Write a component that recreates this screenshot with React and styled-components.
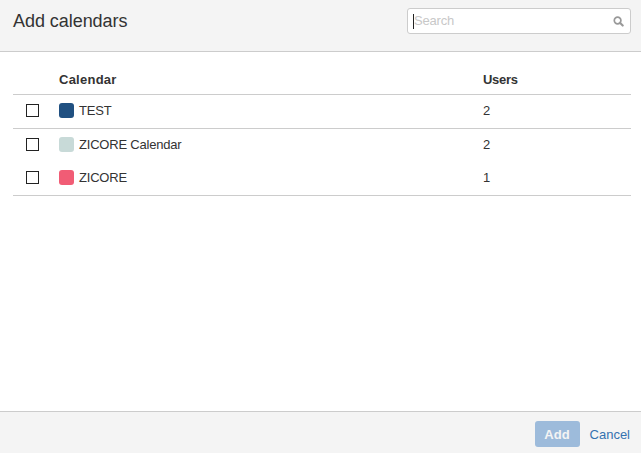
import React from "react";
import styled, { createGlobalStyle } from "styled-components";

const GlobalStyle = createGlobalStyle`
  * { box-sizing: border-box; }
  body {
    margin: 0;
    background: #fff;
    color: #333;
    font: 13px/20px Arial, "Liberation Sans", sans-serif;
  }
`;

const Dialog = styled.div`
  display: flex;
  flex-direction: column;
  width: 641px;
  height: 453px;
  background: #fff;
  overflow: hidden;
`;

const Header = styled.header`
  display: flex;
  justify-content: space-between;
  align-items: flex-start;
  height: 52px;
  padding: 8px 10px 0 13px;
  background: #f4f4f4;
  border-bottom: 1px solid #ccc;
`;

const Title = styled.h1`
  margin: 0;
  padding-top: 1px;
  font-size: 18px;
  line-height: 24px;
  font-weight: 400;
  letter-spacing: -0.05px;
`;

const SearchField = styled.div`
  display: flex;
  align-items: center;
  width: 224px;
  height: 26px;
  padding: 0 6px 0 5px;
  border: 1px solid #ccc;
  border-radius: 3px;
  background: #fff;
`;

const Caret = styled.span`
  width: 1px;
  height: 15px;
  background: #222;
`;

const Placeholder = styled.span`
  flex: 1;
  color: #c8c8c8;
  letter-spacing: -0.2px;
`;

const SearchIcon = styled.svg`
  width: 11px;
  height: 11px;
`;

const Content = styled.main`
  flex: 1;
  padding: 12px 10px 0 13px;
`;

const Row = styled.div`
  display: grid;
  grid-template-columns: 46px 424px 1fr;
  align-items: center;
  height: ${(p) => p.$height}px;
  padding-bottom: ${(p) => (p.$head ? 0 : 2)}px;
  padding-top: ${(p) => (p.$head ? 2 : 0)}px;
  border-bottom: ${(p) => (p.$line ? "1px solid #ccc" : "none")};
`;

const HeadCell = styled.span`
  font-weight: 700;
  letter-spacing: ${(p) => p.$spacing}px;
`;

const Checkbox = styled.span`
  width: 13px;
  height: 13px;
  margin-left: 13px;
  border: 1px solid #222;
  background: #fff;
`;

const Calendar = styled.span`
  display: flex;
  align-items: center;
  gap: 5px;
  letter-spacing: ${(p) => p.$spacing}px;
`;

const Swatch = styled.span`
  width: 15px;
  height: 15px;
  border-radius: 3px;
  background: ${(p) => p.$color};
`;

const Footer = styled.footer`
  display: flex;
  justify-content: flex-end;
  align-items: flex-start;
  gap: 10px;
  height: 42px;
  padding: 9px 11px 0 0;
  background: #f4f4f4;
  border-top: 1px solid #ccc;
`;

const AddButton = styled.button`
  width: 45px;
  height: 26px;
  padding: 0;
  border: 0;
  border-radius: 3px;
  background: #9dbbdb;
  color: #f4f4f4;
  font: 700 13px/28px Arial, "Liberation Sans", sans-serif;
  letter-spacing: 0.1px;
`;

const CancelLink = styled.a`
  color: #3572b0;
  line-height: 28px;
`;

const calendars = [
  { name: "TEST", color: "#205081", users: 2, height: 34, line: true },
  { name: "ZICORE Calendar", color: "#c8dad8", users: 2, height: 33, line: false },
  { name: "ZICORE", color: "#f15c75", users: 1, height: 34, line: true },
];

export default function App() {
  return (
    <>
      <GlobalStyle />
      <Dialog>
        <Header>
          <Title>Add calendars</Title>
          <SearchField>
            <Caret />
            <Placeholder>Search</Placeholder>
            <SearchIcon viewBox="0 0 11 11" fill="none" stroke="#999">
              <circle cx="4.6" cy="4.5" r="3.3" strokeWidth="1.7" />
              <path d="M7.2 7.1 9.7 9.6" strokeWidth="2.1" strokeLinecap="round" />
            </SearchIcon>
          </SearchField>
        </Header>
        <Content>
          <Row $height={31} $line $head>
            <span />
            <HeadCell $spacing={0.25}>Calendar</HeadCell>
            <HeadCell $spacing={-0.3}>Users</HeadCell>
          </Row>
          {calendars.map((c) => (
            <Row key={c.name} $height={c.height} $line={c.line}>
              <Checkbox />
              <Calendar $spacing={-0.2}>
                <Swatch $color={c.color} />
                {c.name}
              </Calendar>
              <span>{c.users}</span>
            </Row>
          ))}
        </Content>
        <Footer>
          <AddButton>Add</AddButton>
          <CancelLink>Cancel</CancelLink>
        </Footer>
      </Dialog>
    </>
  );
}
